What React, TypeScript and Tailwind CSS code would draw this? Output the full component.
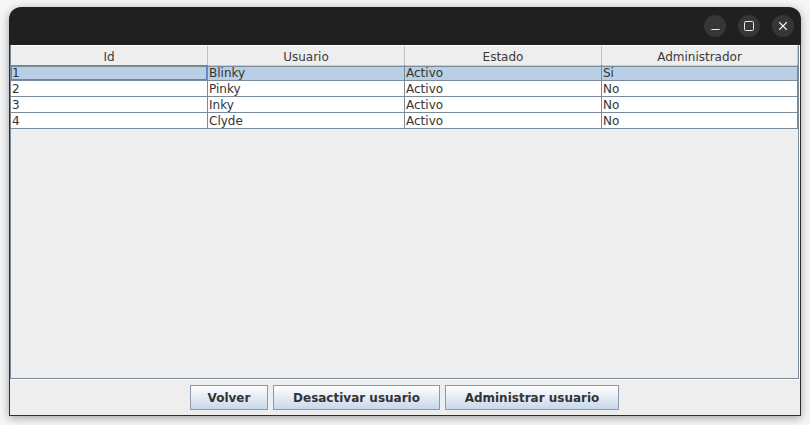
import { Minus, Square, X } from 'lucide-react';

interface Usuario {
  id: number;
  nombre: string;
  estado: string;
  admin: string;
}

const usuarios: Usuario[] = [
  { id: 1, nombre: 'Blinky', estado: 'Activo', admin: 'Si' },
  { id: 2, nombre: 'Pinky', estado: 'Activo', admin: 'No' },
  { id: 3, nombre: 'Inky', estado: 'Activo', admin: 'No' },
  { id: 4, nombre: 'Clyde', estado: 'Activo', admin: 'No' },
];

const columnas = ['Id', 'Usuario', 'Estado', 'Administrador'];

function TitleButton({ children }: { children: React.ReactNode }) {
  return (
    <div className="w-[22px] h-[22px] rounded-full bg-[#363636] flex items-center justify-center text-[#f2f2f2]">
      {children}
    </div>
  );
}

function Boton({ label, width }: { label: string; width: string }) {
  return (
    <button
      className={`${width} h-[25px] border border-[#8a9aab] bg-gradient-to-b from-white to-[#c8d8ea] text-[12px] font-bold text-[#333333] flex items-center justify-center`}
    >
      {label}
    </button>
  );
}

export default function App() {
  return (
    <div
      className="w-[810px] h-[425px] bg-[#f6f6f6] pt-[7px] pl-[9px]"
      style={{ fontFamily: '"DejaVu Sans", "Liberation Sans", sans-serif' }}
    >
      <div className="w-[792px] h-[409px] rounded-t-[12px] overflow-hidden flex flex-col shadow-[0_2px_10px_rgba(0,0,0,0.35)]">
        {/* barra de titulo */}
        <div className="h-[38px] bg-[#202020] flex items-center justify-end gap-[12px] pr-[7px] shrink-0">
          <TitleButton>
            <Minus size={13} strokeWidth={1.8} className="translate-y-[3px]" />
          </TitleButton>
          <TitleButton>
            <Square size={12} strokeWidth={1.9} />
          </TitleButton>
          <TitleButton>
            <X size={14} strokeWidth={1.9} />
          </TitleButton>
        </div>

        <div className="flex-1 flex flex-col bg-[#eeeeee] border-l border-r border-b border-[#2e2e2e]">
          {/* scroll pane */}
          <div className="flex-1 border-r border-b border-white">
            <div className="h-full border border-[#7a8a99] border-t-0 overflow-hidden">
              <div className="grid grid-cols-[197px_197px_197px_196px] h-[20px] bg-[#eeeeee] border-t border-white">
                {columnas.map((c) => (
                  <div
                    key={c}
                    className="border-r border-b border-r-[#b8c2cc] border-b-[#7a8a99] flex items-center justify-center pt-[2px] text-[12px] text-[#3a3a3a]"
                  >
                    {c}
                  </div>
                ))}
              </div>
              {usuarios.map((u, i) => {
                const sel = i === 0;
                const celdas = [String(u.id), u.nombre, u.estado, u.admin];
                return (
                  <div
                    key={u.id}
                    className={`grid grid-cols-[197px_197px_197px_196px] h-[16px] ${sel ? 'bg-[#b8cfe5]' : 'bg-white'}`}
                  >
                    {celdas.map((t, j) => (
                      <div
                        key={j}
                        className={`border-r border-b border-[#7a8a99] pl-[1px] pt-[1px] text-[12px] leading-[14px] text-[#333333] whitespace-nowrap ${sel && j === 0 ? 'shadow-[inset_0_0_0_1px_#6382bf]' : ''}`}
                      >
                        {t}
                      </div>
                    ))}
                  </div>
                );
              })}
            </div>
          </div>

          {/* botones */}
          <div className="h-[35px] flex items-center justify-center gap-[5px] pr-[1px] shrink-0">
            <Boton label="Volver" width="w-[78px]" />
            <Boton label="Desactivar usuario" width="w-[167px]" />
            <Boton label="Administrar usuario" width="w-[174px]" />
          </div>
        </div>
      </div>
    </div>
  );
}
